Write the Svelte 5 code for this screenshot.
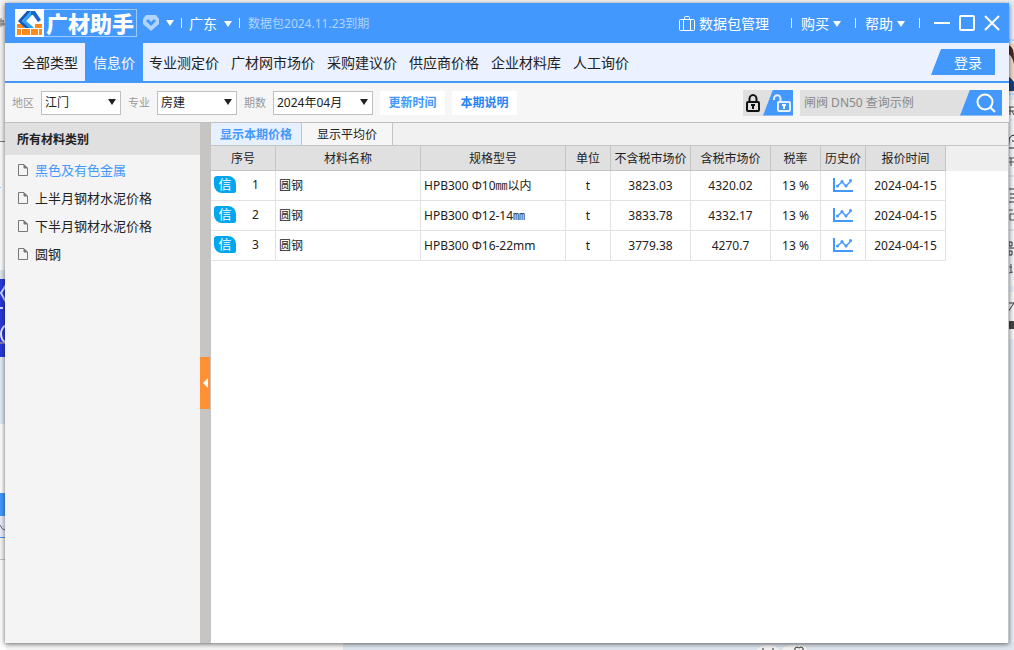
<script>
  const tabs = ['全部类型', '信息价', '专业测定价', '广材网市场价', '采购建议价', '供应商价格', '企业材料库', '人工询价'];
  let activeTab = $state('信息价');

  const filters = [
    { id: 'area', label: '地区', value: '江门', wide: false },
    { id: 'major', label: '专业', value: '房建', wide: false },
    { id: 'period', label: '期数', value: '2024年04月', wide: true }
  ];

  const categories = ['黑色及有色金属', '上半月钢材水泥价格', '下半月钢材水泥价格', '圆钢'];
  let category = $state('黑色及有色金属');

  const views = ['显示本期价格', '显示平均价'];
  let view = $state('显示本期价格');

  const columns = ['序号', '材料名称', '规格型号', '单位', '不含税市场价', '含税市场价', '税率', '历史价', '报价时间'];
  const widths = [65, 145, 145, 45, 80, 80, 50, 45, 80];

  const rows = [
    { name: '圆钢', spec: 'HPB300 Φ10㎜以内', unit: 't', net: '3823.03', gross: '4320.02', tax: '13 %', date: '2024-04-15' },
    { name: '圆钢', spec: 'HPB300 Φ12-14㎜', unit: 't', net: '3833.78', gross: '4332.17', tax: '13 %', date: '2024-04-15' },
    { name: '圆钢', spec: 'HPB300 Φ16-22mm', unit: 't', net: '3779.38', gross: '4270.7', tax: '13 %', date: '2024-04-15' }
  ];
</script>

{#snippet caret()}
  <svg class="caret" width="8" height="6" viewBox="0 0 8 6" aria-hidden="true"><path d="M0 0h8L4 6z" fill="currentColor" /></svg>
{/snippet}

<div class="desktop">
  <svg class="edge left" width="6" height="650" viewBox="0 0 6 650" aria-hidden="true">
    <rect width="6" height="141" fill="#f3f3f3" />
    <path d="M0 21h4M0 24h5M1 18v9M3 20v6" stroke="#777" />
    <rect y="141" width="6" height="1" fill="#777" />
    <rect y="142" width="6" height="128" fill="#fafbfd" />
    <rect y="187" width="1" height="1" fill="#8ec5f8" />
    <rect y="270" width="6" height="9" fill="#dfe6ee" />
    <rect y="279" width="6" height="78" fill="#2939d5" />
    <path d="M6 285l-5 8 5 9M0 308h3" stroke="#d5dcff" stroke-width="2" fill="none" />
    <path d="M6 325q-5 3-5 9t5 9" stroke="#e8eafc" stroke-width="2" fill="none" />
    <path d="M0 343h6" stroke="#dcb59a" />
    <rect y="357" width="6" height="67" fill="#e1e9f4" />
    <rect y="424" width="6" height="69" fill="#fdfdfe" />
    <rect y="493" width="6" height="23" fill="#4199fd" />
    <rect y="516" width="6" height="21" fill="#e9eefb" />
    <path d="M0 525q2 5 5 5" stroke="#666" fill="none" />
    <rect y="537" width="6" height="1" fill="#4199fd" />
    <rect y="538" width="6" height="21" fill="#f5f5f5" />
    <rect y="559" width="6" height="1" fill="#c8c8c8" />
    <rect y="560" width="6" height="90" fill="#fdfdfd" />
  </svg>
  <svg class="edge right" width="6" height="650" viewBox="0 0 6 650" aria-hidden="true">
    <rect width="6" height="650" fill="#e6edf8" />
    <path d="M1 40h5M1 94h5" stroke="#8bb9f0" stroke-dasharray="2 1" />
    <rect y="44" width="6" height="48" fill="#f3d5c8" />
    <path d="M0 45q6 1 6 13v6q-2-9-6-10z" fill="#4b2926" />
    <path d="M0 76q4 3 6 6v9H0z" fill="#173f7c" />
    <rect y="100" width="6" height="19" fill="#f7f7f9" />
    <path d="M1 107h5M1 111h5M2 107v8M4 111l2 4" stroke="#444" />
    <rect y="121" width="6" height="165" fill="#f5f6f9" />
    <path d="M6 135q-5 1-5 6 0 4-1 7h6M4 141h2" stroke="#222" fill="none" />
    <path d="M1 158h5M1 162h5M3 158v8" stroke="#555" />
    <path d="M0 176h6M0 230h6" stroke="#ccc" />
    <path d="M1 189h5M2 194h4M2 198h4M0 202h6" stroke="#333" />
    <path d="M1 210h4M2 214h4M2 214v6h4" stroke="#555" fill="none" />
    <path d="M1 242h3v4H1zM1 251h3v4H1zM0 248h6" stroke="#333" fill="none" />
    <path d="M0 267h4M3 264v9M1 273l4-1" stroke="#555" />
    <rect y="292" width="6" height="47" fill="#f7f7f9" />
    <path d="M0 303h6M6 303l-6 9" stroke="#333" />
    <rect y="321" width="6" height="8" fill="#444" />
  </svg>
  <div class="under"></div>
  <svg class="bubbles" width="60" height="6" viewBox="0 0 60 6" aria-hidden="true">
    <path d="M3 6Q6 1 14 1t11 5zM28 6q3-5 14-5t11 5z" fill="#f4f4f5" />
    <path d="M9 4v2M19 4v2M41 6v-2l2-1 2 1 2-1 2 1v2" stroke="#333" fill="none" />
  </svg>

  <div class="window">
    <header class="titlebar">
      <h1 class="logo">
        <svg width="29" height="28" viewBox="0 0 29 28" aria-hidden="true">
          <path d="M0 0h29v28H0z" fill="#fff" />
          <path d="M2 15h7v4H2zM20 15h7v4h-7zM2 20h4v6H2zM7 20h8v6H7zM16 20h7v6h-7zM24 20h3v6h-3z" fill="#ff8b1f" />
          <path d="M12 2h4L7 12l8 7h-5L3 12z" fill="#1457bd" />
          <path d="M16 2h2v3l-7 7 6 5 2 2h-5l-7-7z" fill="#2aa4f8" />
          <path d="M16 2h4l6 9-3 2-5-7h-2z" fill="#1768cd" />
        </svg>
        <span>广材助手</span>
      </h1>
      <button class="plain gem" aria-label="会员">
        <svg width="16" height="16" viewBox="0 0 16 16"><path d="M3 0h10l3 4v5l-8 7-8-7V4z" fill="#b2d4ff" /><path d="M4 5l4 4 4-4" fill="none" stroke="#4398fe" stroke-width="3" /></svg>
        {@render caret()}
      </button>
      <i class="sep"></i>
      <button class="plain province">广东 {@render caret()}</button>
      <i class="sep"></i>
      <span class="expiry">数据包2024.11.23到期</span>
      <span class="grow"></span>
      <button class="plain pack">
        <svg width="16" height="16" viewBox="0 0 16 16" fill="none" stroke="#fff"><rect x=".5" y="3.5" width="15" height="11" rx="1" /><path d="M4.500 14V3.500M11.500 14V3.500M5.500 3V1.500q0-1 1-1h3q1 0 1 1V3" /></svg>
        数据包管理
      </button>
      <i class="sep"></i>
      <button class="plain menu">购买 {@render caret()}</button>
      <i class="sep"></i>
      <button class="plain menu">帮助 {@render caret()}</button>
      <i class="sep"></i>
      <div class="controls">
        <button class="plain" aria-label="最小化"><svg width="16" height="16" viewBox="0 0 16 16"><path d="M0 8h16" stroke="#fff" stroke-width="2" /></svg></button>
        <button class="plain" aria-label="最大化"><svg width="16" height="16" viewBox="0 0 16 16"><rect x="1" y="1" width="14" height="14" rx="1" fill="none" stroke="#fff" stroke-width="2" /></svg></button>
        <button class="plain" aria-label="关闭"><svg width="16" height="16" viewBox="0 0 16 16"><path d="M1 1l14 14M15 1L1 15" stroke="#fff" stroke-width="2" /></svg></button>
      </div>
    </header>

    <nav class="nav">
      {#each tabs as tab}
        <button class="plain" class:active={tab === activeTab} onclick={() => (activeTab = tab)}>{tab}</button>
      {/each}
      <button class="plain login">登录</button>
    </nav>

    <div class="filters">
      {#each filters as f}
        <label for={f.id}>{f.label}</label>
        <span class="select" class:wide={f.wide}>
          <select id={f.id}><option>{f.value}</option></select>
          {@render caret()}
        </span>
      {/each}
      <button class="plain note soft">更新时间</button>
      <button class="plain note">本期说明</button>
      <span class="grow"></span>
      <div class="locks">
        <button class="plain" aria-label="锁定">
          <svg width="14" height="18" viewBox="0 0 14 18"><path d="M3.500 8V5a3.500 4 0 0 1 7 0v3" fill="none" stroke="#111" stroke-width="2" /><rect x="1" y="8" width="12" height="9" rx="1" fill="#e0e0e0" stroke="#111" stroke-width="2" /><path d="M5 10h4v2H8v3H6v-3H5z" fill="#111" /></svg>
        </button>
        <button class="plain open" aria-label="解锁">
          <svg width="18" height="18" viewBox="0 0 18 18"><path d="M1 6V4.500a3 3 0 0 1 6.500 0V8" fill="none" stroke="#e4f0ff" stroke-width="2" /><rect x="5" y="8" width="12" height="9" rx="1" fill="none" stroke="#e4f0ff" stroke-width="2" /><path d="M9 10h4v2h-1v3h-2v-3H9z" fill="#fff" /></svg>
        </button>
      </div>
      <form class="search" onsubmit={(e) => e.preventDefault()}>
        <input type="text" aria-label="搜索材料" placeholder="闸阀 DN50 查询示例" />
        <button class="plain" aria-label="搜索"><svg width="20" height="20" viewBox="0 0 20 20" fill="none" stroke="#fff" stroke-width="2"><circle cx="9" cy="9" r="7.500" /><path d="M14 14l5 5" /></svg></button>
      </form>
    </div>

    <div class="body">
      <aside>
        <h2>所有材料类别</h2>
        <ul>
          {#each categories as c}
            <li>
              <button class="plain category" class:active={c === category} onclick={() => (category = c)}>
                <svg width="10" height="12" viewBox="0 0 10 12" fill="none" stroke="#777"><path d="M.5.5h5.500l3.500 3.500v7.500h-9z" /><path d="M6 1v3h3z" fill="#777" /></svg>
                {c}
              </button>
            </li>
          {/each}
        </ul>
      </aside>
      <div class="splitter">
        <button class="plain" aria-label="收起分类"><svg width="5" height="10" viewBox="0 0 5 10"><path d="M5 0v10L0 5z" fill="#fff" /></svg></button>
      </div>
      <main>
        <div class="views">
          {#each views as v}
            <button class="plain" class:active={v === view} onclick={() => (view = v)}>{v}</button>
          {/each}
        </div>
        <div class="sheet">
          <table>
            <colgroup>
              {#each widths as w}<col style:width="{w}px" />{/each}
            </colgroup>
            <thead>
              <tr>{#each columns as c}<th>{c}</th>{/each}</tr>
            </thead>
            <tbody>
              {#each rows as r, i}
                <tr>
                  <td><div class="index"><span class="badge">信</span><span class="num">{i + 1}</span></div></td>
                  <td class="start">{r.name}</td>
                  <td class="start">{r.spec}</td>
                  <td>{r.unit}</td>
                  <td>{r.net}</td>
                  <td>{r.gross}</td>
                  <td>{r.tax}</td>
                  <td>
                    <button class="plain chart" aria-label="历史价">
                      <svg width="20" height="14" viewBox="0 0 20 14" fill="none" stroke="#4398fe"><path d="M1 0v13h19" stroke-width="2" /><path d="M4.500 8l4.500-4 4 4 5-5" stroke-width="1.500" /><g fill="#4398fe" stroke="none"><circle cx="4.500" cy="8" r="1.500" /><circle cx="9" cy="3.500" r="1.500" /><circle cx="13" cy="8" r="1.500" /><circle cx="17.500" cy="2.500" r="1.500" /></g></svg>
                    </button>
                  </td>
                  <td>{r.date}</td>
                </tr>
              {/each}
            </tbody>
          </table>
        </div>
      </main>
    </div>
  </div>
</div>

<style>
  :global(body) { margin: 0; }
  .desktop, .desktop * { box-sizing: border-box; }
  .desktop {
    position: relative;
    display: flex;
    min-height: 100vh;
    padding: 3px 5px 7px;
    background: #f6f6f7;
    overflow: hidden;
    font: 12px/16px "Noto Sans", "Noto Sans CJK SC", sans-serif;
    color: #222;
  }
  .edge { position: absolute; top: 0; }
  .edge.left { left: 0; }
  .edge.right { right: 0; }
  .under { position: absolute; left: 343px; right: 0; bottom: 0; height: 8px; background: #dfe6ef; }
  .bubbles { position: absolute; right: 200px; bottom: 0; }

  .window {
    position: relative;
    flex: 1;
    min-width: 0;
    display: flex;
    flex-direction: column;
    background: #fff;
    box-shadow: 0 1px 5px rgba(0, 0, 0, 0.6);
  }
  .plain {
    display: inline-flex;
    align-items: center;
    justify-content: center;
    padding: 0;
    border: 0;
    background: none;
    font: inherit;
    color: inherit;
    white-space: nowrap;
    cursor: pointer;
  }
  svg { flex: none; }
  .grow { flex: 1; }

  .titlebar {
    display: flex;
    align-items: center;
    height: 40px;
    padding: 0 9px 0 10px;
    background: #4398fe;
    color: #fff;
    font-size: 14px;
    white-space: nowrap;
  }
  .logo {
    display: flex;
    align-items: center;
    height: 28px;
    margin: 0 6px 0 0;
    padding-right: 2px;
    border: 1px solid #9ecbff;
    border-left: 0;
    font: 900 22px/22px "Noto Sans CJK SC", sans-serif;
  }
  .logo span { padding: 0 0 3px 2px; }
  .gem { gap: 7px; }
  .sep { width: 1px; height: 10px; margin: 0 7px; background: #e2efff; }
  .province { gap: 7px; padding-top: 2px; }
  .expiry { padding: 2px 0 0 1px; font-size: 12px; color: #b2d4ff; }
  .pack { gap: 4px; margin-right: 15px; padding-top: 2px; }
  .menu { gap: 4px; margin: 0 7px 0 2px; padding-top: 2px; }
  .controls { display: flex; gap: 9px; margin-left: 7px; }

  .nav {
    display: flex;
    height: 40px;
    padding: 0 14px 0 10px;
    background: #ebf1ff;
    border-bottom: 2px solid #4398fe;
    font-size: 14px;
  }
  .nav button { padding: 2px 6px 0; }
  .nav button:first-child { padding: 2px 7px 0; }
  .nav .active { padding: 2px 8px 0; background: #4398fe; color: #fff; }
  .nav .login {
    width: 64px;
    height: 26px;
    margin: auto 0 auto auto;
    padding: 2px 0 0 10px;
    background: #4398fe;
    color: #fff;
    clip-path: polygon(10px 0, 100% 0, 100% 100%, 0 100%);
  }

  .filters {
    display: flex;
    align-items: center;
    gap: 7px;
    height: 40px;
    padding: 0 7px;
    background: #f6f6f6;
    border-bottom: 1px solid #bfbfbf;
  }
  .filters label { font-size: 11px; color: #999; }
  .select { position: relative; display: flex; width: 80px; height: 24px; }
  .select.wide { width: 100px; }
  .select select {
    flex: 1;
    padding: 0 3px;
    border: 1px solid #bfbfbf;
    border-radius: 0;
    background: #fff;
    color: #222;
    font: inherit;
    appearance: none;
  }
  .select .caret { position: absolute; right: 5px; top: 8px; pointer-events: none; }
  .note { width: 65px; height: 24px; background: #fff; color: #2385fb; font-weight: bold; }
  .soft { color: #4398fe; }
  .locks { display: flex; height: 26px; width: 50px; background: #e0e0e0; }
  .locks button { width: 20px; }
  .locks .open { flex: 1; padding-left: 8px; background: #4398fe; clip-path: polygon(10px 0, 100% 0, 100% 100%, 0 100%); }
  .search { display: flex; width: 202px; height: 26px; background: #e0e0e0; }
  .search input { flex: 1; min-width: 0; padding: 0 4px; border: 0; background: none; font: inherit; outline: none; }
  .search input::placeholder { color: #888; opacity: 1; }
  .search button { width: 42px; padding-left: 9px; background: #4398fe; clip-path: polygon(10px 0, 100% 0, 100% 100%, 0 100%); }

  .body { flex: 1; display: flex; }
  aside { width: 195px; background: #f4f4f4; }
  h2 { margin: 0; padding: 9px 12px 7px; background: #e0e0e0; font-size: 12px; line-height: 16px; }
  ul { margin: 0; padding: 1px 0; list-style: none; }
  .category { width: 100%; height: 28px; padding: 0 13px; justify-content: flex-start; gap: 7px; font-size: 13px; }
  .category.active { color: #4398fe; }
  .splitter { display: flex; align-items: center; width: 11px; padding-right: 1px; background: #c6c5c4; }
  .splitter button { width: 10px; height: 52px; background: #ff9034; }

  main { flex: 1; min-width: 0; border-right: 1px solid #c6c6c6; }
  .views { display: flex; height: 23px; background: #f1f1f1; border-bottom: 1px solid #c4c4c4; }
  .views button { width: 91px; padding-top: 2px; border-right: 1px solid #c4c4c4; background: #f6f6f6; }
  .views .active { background: #e6f0ff; color: #4398fe; font-weight: bold; }
  .sheet { background: linear-gradient(#efefef 25px, #fff 25px); }
  table { width: 735px; border-collapse: separate; border-spacing: 0; table-layout: fixed; }
  th, td { padding: 0; border-right: 1px solid #e2e2e2; border-bottom: 1px solid #e2e2e2; text-align: center; white-space: nowrap; }
  th { height: 25px; padding-top: 2px; background: #e0e0e0; border-color: #c4c4c4; font-weight: normal; }
  td { height: 30px; }
  .start { padding-left: 3px; text-align: left; }
  .index { display: flex; align-items: center; padding: 0 2px 2px 3px; }
  .badge {
    width: 22px;
    height: 17px;
    border-radius: 3px 8px 2px 8px;
    background: #00a7f0;
    color: #fff;
    font-size: 13px;
    line-height: 17px;
  }
  .num { flex: 1; padding-left: 2px; }
  .chart { display: flex; margin: auto; padding-bottom: 2px; }
</style>
